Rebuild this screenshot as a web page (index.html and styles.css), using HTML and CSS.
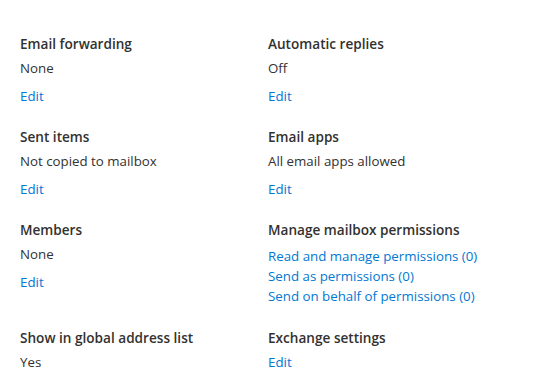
FILE: index.html
```html
<!DOCTYPE html>
<html lang="en">
<head>
    <meta charset="UTF-8">
    <title>Mailbox settings</title>
    <link rel="stylesheet" href="styles.css">
</head>
<body>
<div class="settings">
    <div class="item">
        <h3>Email forwarding</h3>
        <p>None</p>
        <a href="javascript:;" class="edit">Edit</a>
    </div>
    <div class="item">
        <h3>Automatic replies</h3>
        <p>Off</p>
        <a href="javascript:;" class="edit">Edit</a>
    </div>
    <div class="item">
        <h3>Sent items</h3>
        <p>Not copied to mailbox</p>
        <a href="javascript:;" class="edit">Edit</a>
    </div>
    <div class="item">
        <h3>Email apps</h3>
        <p>All email apps allowed</p>
        <a href="javascript:;" class="edit">Edit</a>
    </div>
    <div class="item">
        <h3>Members</h3>
        <p>None</p>
        <a href="javascript:;" class="edit">Edit</a>
    </div>
    <div class="item">
        <h3>Manage mailbox permissions</h3>
        <div class="links">
            <a href="javascript:;">Read and manage permissions (0)</a>
            <a href="javascript:;">Send as permissions (0)</a>
            <a href="javascript:;">Send on behalf of permissions (0)</a>
        </div>
    </div>
    <div class="item">
        <h3>Show in global address list</h3>
        <p>Yes</p>
    </div>
    <div class="item">
        <h3>Exchange settings</h3>
        <a href="javascript:;" class="edit first">Edit</a>
    </div>
</div>
</body>
</html>
```

FILE: styles.css
```css
* {
    margin: 0;
    padding: 0;
    text-decoration: none;
}
body {
    padding: 34px 20px 0 20px;
    font-family: "Open Sans", "Liberation Sans", sans-serif;
    font-size: 13.3px;
    color: #323130;
    background: #fff;
}
.settings {
    display: grid;
    grid-template-columns: 248px 1fr;
    row-gap: 21px;
}
.item h3 {
    font-size: 13.6px;
    font-weight: 600;
    line-height: 20px;
    margin-bottom: 4px;
}
.item p {
    line-height: 20px;
}
.item a {
    display: block;
    color: #0078d4;
    line-height: 20px;
}
.item .edit {
    margin-top: 8px;
}
.item .edit.first {
    margin-top: 0;
}
.links {
    margin-top: 6px;
    padding-bottom: 1px;
}
```
